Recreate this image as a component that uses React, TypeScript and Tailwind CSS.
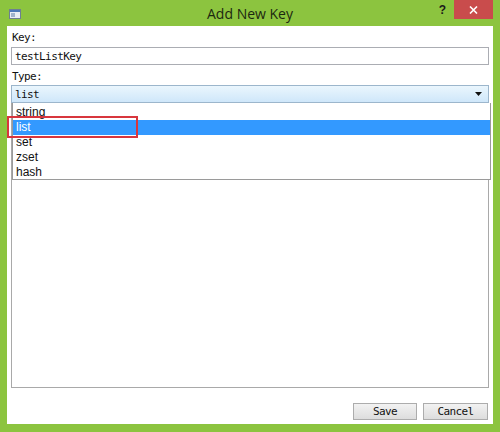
import React from 'react'

const types = ['string', 'list', 'set', 'zset', 'hash']

const App = () => {
	const selected = 'list'

	return (
		<div className="w-[500px] h-[432px] bg-[#8cc43f] flex flex-col font-['Liberation_Sans',sans-serif]">
			{/* title bar */}
			<div className="h-[26px] grid grid-cols-[1fr_auto_1fr] items-start">
				<div className="pt-[9px] pl-[9px]">
					<svg width="12" height="10" viewBox="0 0 12 10">
						<rect x="0.5" y="0.5" width="11" height="9" fill="#e8eef4" stroke="#6d7f92" />
						<rect x="1" y="1" width="10" height="2" fill="#4a78b8" />
						<rect x="2" y="4" width="4" height="4" fill="#9fb4cc" />
					</svg>
				</div>
				<div className="pt-[5px] text-[14px] text-[#1c2810] font-['Open_Sans',sans-serif] leading-[17px]">Add New Key</div>
				<div className="flex justify-end items-start pr-[7px]">
					<span className="mt-[3px] mr-[8px] text-[12px] font-bold text-[#1a1a1a] leading-[14px]">?</span>
					<div className="w-[39px] h-[19px] bg-[#c94c4c] flex items-center justify-center">
						<svg width="9" height="8" viewBox="0 0 9 8">
							<path d="M1 0.5 L8 7.5 M8 0.5 L1 7.5" stroke="#fff" strokeWidth="1.6" />
						</svg>
					</div>
				</div>
			</div>

			{/* client area */}
			<div className="mx-[7px] h-[398px] bg-white flex flex-col pt-[5px] px-[4px] font-['DejaVu_Sans_Mono',monospace] text-[11px] tracking-[-0.6px] text-[#111]">
				<div className="h-[14px] leading-[14px] pl-[1px]">Key:</div>
				<div className="mt-[2px] h-[18px] border border-[#abadb3] flex items-center px-[3px] leading-none">testListKey</div>
				<div className="mt-[5px] h-[14px] leading-[14px] pl-[1px]">Type:</div>
				<div className="mt-[1px] h-[18px] border border-[#9cb6cc] bg-gradient-to-b from-[#eaf6fd] to-[#cfe7fa] flex items-center justify-between px-[3px] leading-none">
					<span>{selected}</span>
					<svg width="7" height="4" viewBox="0 0 7 4" className="mr-[3px]">
						<path d="M0 0 H7 L3.5 4 Z" fill="#111" />
					</svg>
				</div>

				{/* list box behind, with open dropdown on top */}
				<div className="relative h-[285px] border border-[#a9a9a9] border-t-0">
					<div className="absolute left-0 right-[-3px] top-0 h-[77px] bg-white border border-[#9a9a9a] border-t-0 pt-[2px] font-['Liberation_Sans',sans-serif] text-[12px] tracking-normal">
						{types.map((t) => (
							<div
								key={t}
								className={
									t === selected
										? 'h-[15px] leading-[15px] pl-[3px] bg-[#3399ff] text-white'
										: 'h-[15px] leading-[15px] pl-[3px] text-[#111]'
								}
							>
								{t}
							</div>
						))}
					</div>
					<div className="absolute left-[-5px] top-[13px] w-[131px] h-[22px] border-2 border-[#d8363e]" />
				</div>

				<div className="mt-[15px] flex justify-end gap-[6px] pr-[1px]">
					<button className="w-[64px] h-[17px] border border-[#acacac] bg-gradient-to-b from-[#f2f2f2] to-[#dddddd] leading-none tracking-[-0.6px]">Save</button>
					<button className="w-[65px] h-[17px] border border-[#acacac] bg-gradient-to-b from-[#f2f2f2] to-[#dddddd] leading-none tracking-[-0.6px]">Cancel</button>
				</div>
			</div>
		</div>
	)
}

export default App
